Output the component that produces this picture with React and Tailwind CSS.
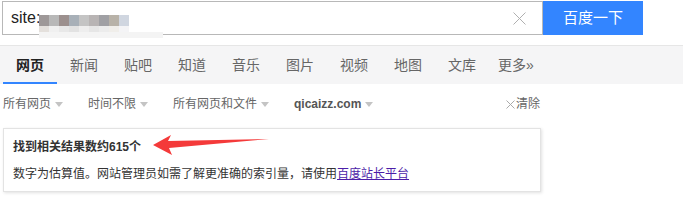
import React from 'react';

const tabs = ['网页', '新闻', '贴吧', '知道', '音乐', '图片', '视频', '地图', '文库', '更多»'];

const blurTop = ['#9e9898', '#b8b8b8', '#9c908e', '#a8b0b8', '#c4c4c4', '#b8b4b4', '#a0a0a4', '#b8b2a8', '#d0d6e0'];
const blurMid = ['#e4e0dc', '#f0f0f0', '#e8e8e8', '#e2e2e2', '#eeeeee', '#e6e6e6', '#ececec', '#f0eeea', '#f4f4f6'];

function Caret() {
  return (
    <span className="ml-[4px] inline-block h-0 w-0 border-x-[4px] border-t-[5px] border-x-transparent border-t-[#c4c4c4]" />
  );
}

export default function App() {
  return (
    <div
      className="relative w-[683px] h-[212px] overflow-hidden bg-white"
      style={{ fontFamily: '"Liberation Sans", "Noto Sans CJK SC", sans-serif' }}
    >
      {/* search bar */}
      <div className="h-[46px] border-b border-[#e6e6e6] pt-[1px] pl-[2px]">
        <div className="flex h-[34px]">
          <div className="relative flex w-[541px] items-center border border-[#b8b8b8] bg-white pl-[8px] pr-[8px]">
            <span className="text-[16px] text-[#222222]">site:</span>
            <div className="flex-1" />
            <svg width="13" height="13" viewBox="0 0 13 13" className="mr-[8px]">
              <path d="M0.5 0.5L12.5 12.5M12.5 0.5L0.5 12.5" stroke="#b0b0b0" strokeWidth="1" fill="none" />
            </svg>
            {/* blurred query */}
            <div className="absolute left-[36px] top-[13px] flex flex-col">
              <div className="flex">
                {blurTop.map((c, i) => (
                  <div key={i} className="h-[11px] w-[10px]" style={{ backgroundColor: c }} />
                ))}
              </div>
              <div className="flex">
                {blurMid.map((c, i) => (
                  <div key={i} className="h-[6px] w-[10px]" style={{ backgroundColor: c }} />
                ))}
              </div>
              <div className="h-[6px] w-[124px] bg-[#f4f4f4]" />
            </div>
          </div>
          <button className="flex h-[34px] w-[100px] items-center justify-center bg-[#3385ff] text-[15px] text-white">
            百度一下
          </button>
        </div>
      </div>

      {/* tabs */}
      <div className="flex h-[38px] bg-[#f5f5f6] pl-[3px]">
        {tabs.map((t, i) => (
          <div
            key={t}
            className={`flex w-[54px] items-center justify-center text-[14px] ${
              i === 0 ? 'border-b-2 border-[#3385ff] pt-[2px] font-bold text-[#222222]' : 'text-[#666666]'
            }`}
          >
            {t}
          </div>
        ))}
      </div>

      {/* filters */}
      <div className="flex h-[40px] items-center pl-[3px] text-[12px] text-[#666666]">
        <div className="flex w-[85px] items-center">所有网页<Caret /></div>
        <div className="flex w-[85px] items-center">时间不限<Caret /></div>
        <div className="flex w-[121px] items-center">所有网页和文件<Caret /></div>
        <div className="flex w-[212px] items-center font-bold text-[#555555]">qicaizz.com<Caret /></div>
        <div className="flex items-center">
          <svg width="9" height="9" viewBox="0 0 9 9" className="mr-[1px]">
            <path d="M0.5 0.5L8.5 8.5M8.5 0.5L0.5 8.5" stroke="#aaaaaa" strokeWidth="1" fill="none" />
          </svg>
          <span>清除</span>
        </div>
      </div>

      {/* result count box */}
      <div className="ml-[3px] mt-[4px] h-[64px] w-[538px] border border-[#e3e3e3] pl-[9px] pt-[9px] shadow-[1px_1px_3px_rgba(0,0,0,0.12)]">
        <div className="text-[12px] font-bold leading-[18px] text-[#333333]">找到相关结果数约615个</div>
        <div className="mt-[9px] text-[12px] leading-[18px] text-[#333333]">
          数字为估算值。网站管理员如需了解更准确的索引量，请使用
          <a href="#" className="text-[#4c1ea8] underline">百度站长平台</a>
        </div>
      </div>

      {/* annotation arrow */}
      <svg className="absolute left-[150px] top-[132px]" width="122" height="26" viewBox="150 132 122 26">
        <polygon points="153,145 171,135 168,141 269,139 169,148 172,155" fill="#f43a3a" />
      </svg>
    </div>
  );
}
